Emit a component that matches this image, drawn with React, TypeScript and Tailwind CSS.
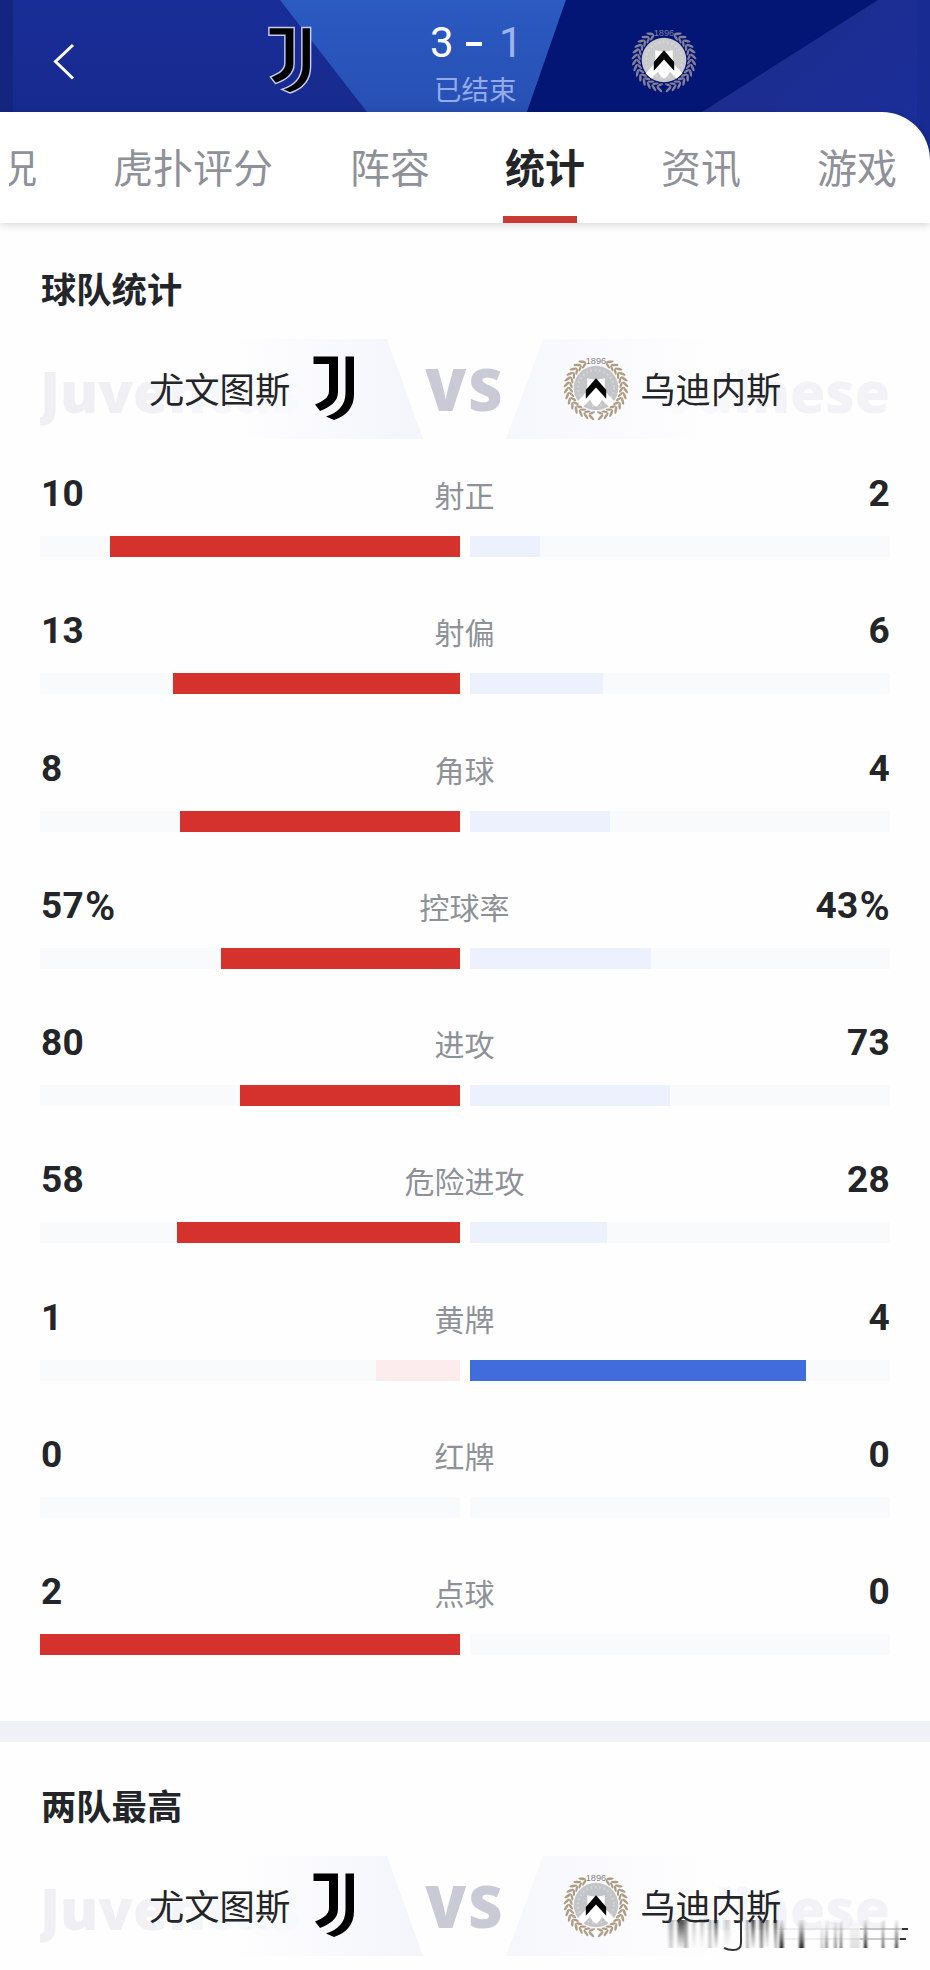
import clsx from "clsx";

type Stat = { label: string; home: number; away: number; unit?: string };

const stats: Stat[] = [
  { label: "射正", home: 10, away: 2 },
  { label: "射偏", home: 13, away: 6 },
  { label: "角球", home: 8, away: 4 },
  { label: "控球率", home: 57, away: 43, unit: "%" },
  { label: "进攻", home: 80, away: 73 },
  { label: "危险进攻", home: 58, away: 28 },
  { label: "黄牌", home: 1, away: 4 },
  { label: "红牌", home: 0, away: 0 },
  { label: "点球", home: 2, away: 0 },
];

// x offset, stroke width and opacity of each streak in the signature
const fadingDown = [
  [9, 5, 0.35], [19, 7, 0.85], [24, 3, 0.6], [32, 3, 0.3], [40, 3, 0.3], [48, 3, 0.35], [54, 3, 0.9],
  [65, 6, 0.2], [85.5, 2, 0.5], [91, 4, 0.85], [99.5, 4, 0.8], [105, 3, 0.6], [113.5, 3, 0.8],
];
const fadingUp = [
  [9, 4, 0.15], [24, 4, 0.25], [48, 3, 0.2], [85.5, 2, 0.4], [99.5, 3, 0.4], [114, 2, 0.3],
  [119.5, 4, 0.95], [139.5, 5, 0.9], [160, 2, 0.3], [164.5, 2, 0.7], [173.5, 2, 0.65], [179, 2, 0.75],
  [193, 10, 0.12], [203.5, 3, 0.95], [221, 2, 0.8], [234.5, 2.5, 0.9],
];

export default function App() {
  return (
    <div className="h-[1970px] w-[930px] overflow-hidden bg-[#fefefe] font-['Noto_Sans_CJK_SC',sans-serif] text-[#242528]">
      <ScoreHeader />
      <section className="h-[1498px] px-10 pt-10">
        <SectionTitle>球队统计</SectionTitle>
        <Matchup />
        <div className="mt-[29px]">
          {stats.map((stat) => (
            <StatRow key={stat.label} {...stat} />
          ))}
        </div>
      </section>
      <div className="h-[21px] bg-[#f0f1f7]" />
      <section className="px-10 pt-[38px]">
        <SectionTitle>两队最高</SectionTitle>
        <Matchup signed />
      </section>
    </div>
  );
}

function ScoreHeader() {
  return (
    <header className="relative h-[223px] bg-[#1a2f9c]">
      <svg className="absolute inset-0" width="930" height="223" viewBox="0 0 930 223">
        <defs>
          <linearGradient id="mid" x1="0" y1="0" x2="0" y2="1">
            <stop offset="0" stopColor="#2b5ac1" />
            <stop offset="1" stopColor="#2750b4" />
          </linearGradient>
          <linearGradient id="base" x1="0" y1="0" x2="0" y2="1">
            <stop offset="0" stopColor="#192d98" />
            <stop offset="1" stopColor="#172a8e" />
          </linearGradient>
          <linearGradient id="corner" x1="0" y1="0" x2="1" y2="1">
            <stop offset="0.3" stopColor="#1c2d90" />
            <stop offset="1" stopColor="#1a2f9f" />
          </linearGradient>
        </defs>
        <rect width="930" height="112" fill="url(#base)" />
        <rect width="13" height="112" fill="#14257f" />
        <path d="M280 0H566L527 112H367Z" fill="url(#mid)" />
        <path d="M566 0H930V223H700L527 112Z" fill="#031675" />
        <path d="M878 0H930V223H702V112Z" fill="url(#corner)" />
        <rect x="917" width="13" height="223" fill="#182b93" />
      </svg>

      <div className="relative flex h-28">
        <svg className="mt-[43px] ml-[52px] shrink-0" width="24" height="38" viewBox="0 0 24 38" fill="none" stroke="#fff" strokeWidth="3">
          <path d="M21 2L3.500 18.500L21 35.500" />
        </svg>
        <JuventusLogo className="mt-[26px] ml-[190px] h-[68px] w-[47px] shrink-0" outlined />
        <div className="ml-[112px] w-[102px] shrink-0 pt-[21px]">
          <div className="flex h-11 items-center pl-[5px] font-['Roboto',sans-serif] text-[42px] leading-[44px] text-white">
            <span className="w-[36px]">3</span>
            <span className="mt-px h-[4px] w-[16px] bg-white" />
            <span className="ml-[17px] text-[#9db4ec]">1</span>
          </div>
          <p className="ml-[9px] mt-[9px] whitespace-nowrap text-[27.500px] leading-[28px] text-[#93abeb]">已结束</p>
        </div>
        <UdineseLogo className="mt-[27px] ml-[104px] size-[66px] shrink-0" dark />
      </div>

      <nav className="relative flex h-[111px] items-center rounded-tr-[48px] bg-white pb-[3px] text-[40px] text-[#8e9198] shadow-[0_2px_8px_rgba(0,0,0,0.16)]">
        <div className="ml-[9px] flex w-[28px] justify-end overflow-hidden">
          <span>况</span>
        </div>
        <span className="ml-[76px]">虎扑评分</span>
        <span className="ml-[77px]">阵容</span>
        <span className="relative ml-[75px] font-bold text-[#242528]">
          统计
          <i className="absolute -bottom-[27px] -left-[2px] h-[7px] w-[74px] bg-[#c93a36]" />
        </span>
        <span className="ml-[76px]">资讯</span>
        <span className="ml-[76px]">游戏</span>
      </nav>
    </header>
  );
}

function SectionTitle({ children }: { children: string }) {
  return <h2 className="h-[52px] pl-px text-[35.300px] leading-[50px] font-bold">{children}</h2>;
}

function Matchup({ signed }: { signed?: boolean }) {
  return (
    <div className="relative mt-6 flex h-[100px] w-[850px] items-center text-[35px]">
      <svg className="absolute inset-0" width="850" height="100" viewBox="0 0 850 100">
        <defs>
          <linearGradient id="fadeLeft" x1="0" x2="1">
            <stop offset="0" stopColor="#f3f5fb" stopOpacity="0" />
            <stop offset="1" stopColor="#f4f5fb" />
          </linearGradient>
          <linearGradient id="fadeRight" x1="0" x2="1">
            <stop offset="0" stopColor="#f6f7fc" />
            <stop offset="1" stopColor="#f6f7fc" stopOpacity="0" />
          </linearGradient>
        </defs>
        <path d="M190 0H347L383 100H190Z" fill="url(#fadeLeft)" />
        <path d="M503 0H680V100H466Z" fill="url(#fadeRight)" />
      </svg>
      <span className="absolute left-0 top-[14px] bg-gradient-to-r from-[#efeff4] from-30% to-[#f8f9fc] to-75% bg-clip-text font-['Open_Sans',sans-serif] text-[57px] leading-[76px] font-extrabold text-transparent">Juventus</span>
      <span className="absolute right-0 top-[14px] bg-gradient-to-r from-[#fafbfd] from-10% to-[#f2f2f7] to-60% bg-clip-text font-['Open_Sans',sans-serif] text-[57px] leading-[76px] font-extrabold text-transparent">Udinese</span>

      <span className="relative ml-[109px] -translate-y-px text-[35.300px]">尤文图斯</span>
      <JuventusLogo className="relative ml-[22px] h-[66px] w-[43px] -translate-y-px" />
      <span className="relative ml-[70px] w-[79px] -translate-y-px font-['Open_Sans',sans-serif] text-[59px] leading-none font-extrabold tracking-[2px] text-[#cacad6]">VS</span>
      <UdineseLogo className="relative ml-[59px] size-[66px] -translate-y-px" />
      <span className="relative ml-[11px] -translate-y-px text-[35.300px]">乌迪内斯</span>
      {signed && <Signature />}
    </div>
  );
}

function StatRow({ label, home, away, unit }: Stat) {
  const total = home + away || 1;
  const mark = unit && <span className="relative top-[2px] ml-px text-[41px] leading-none font-semibold">{unit}</span>;
  return (
    <div className="h-[137.300px]">
      <div className="relative flex h-[50px] items-center justify-between pt-[2px] pl-px font-['Roboto',sans-serif] text-[37px] leading-[50px] font-bold tracking-[0.300px]">
        <span>{home}{mark}</span>
        <span>{away}{mark}</span>
        <span className="absolute inset-x-0 top-px -ml-px text-center font-['Noto_Sans_CJK_SC',sans-serif] text-[30px] leading-[50px] font-normal tracking-normal text-[#8e9198]">{label}</span>
      </div>
      <div className="mt-[18px] grid h-[21px] w-[850px] grid-cols-2 gap-[10px]">
        <div className="flex justify-end bg-[#f9fafb]">
          <div className={clsx("h-full", home >= away ? "bg-[#d5322e]" : "bg-[#fcecee]")} style={{ width: `${(home / total) * 100}%` }} />
        </div>
        <div className="bg-[#f9fafb]">
          <div className={clsx("h-full", away > home ? "bg-[#416ddc]" : "bg-[#edf1fe]")} style={{ width: `${(away / total) * 100}%` }} />
        </div>
      </div>
    </div>
  );
}

function JuventusLogo({ className, outlined }: { className?: string; outlined?: boolean }) {
  return (
    <svg className={className} viewBox="0 0 43 66" fill="#000" stroke={outlined ? "#c6ccf2" : "none"} strokeWidth="1.400">
      <path d="M1.500 1.500H26V37C26 47 18 52 8 56L3 49.500C11 46 17 43 17 36V9H1.500Z" />
      <path d="M33.500 1.500H42V39C42 53 34 61 22 65L14 61.500C25 58 33.500 51 33.500 38Z" />
    </svg>
  );
}

function UdineseLogo({ className, dark }: { className?: string; dark?: boolean }) {
  const leaf = dark ? "#85809a" : "#ae9c83";
  // leaf angles measured from the foot of the wreath
  const angles = [9, 20, 31, 42, 53, 64, 75, 86, 97, 108, 119, 130, 141, 152];
  return (
    <svg className={className} viewBox="0 0 68 68">
      {[1, -1].map((side) => (
        <g key={side} transform={side === 1 ? undefined : "translate(68 0) scale(-1 1)"}>
          {angles.map((angle) => (
            <g key={angle} transform={`rotate(${-angle} 34 34)`} fill={leaf}>
              <ellipse cx="34" cy="64.500" rx="4" ry="1.300" transform="rotate(-38 34 64.500)" />
              <ellipse cx="34" cy="60" rx="3.400" ry="1.200" transform="rotate(30 34 60)" />
            </g>
          ))}
        </g>
      ))}
      <circle cx="34" cy="34" r="23" fill={dark ? "#c9cacc" : "#c4c5c8"} />
      <circle cx="34" cy="34" r="18.500" fill="none" stroke="#d6d7d9" strokeWidth="2.500" strokeDasharray="1.500 3" />
      <path d="M25 24Q34 27 43 24V37L53 48L47 53L40 46Q38 51 34 53Q30 51 28 46L21 53L15 48L25 37Z" fill="#fff" />
      <path d="M34 24L44.500 36V45L34 33.500L23.500 45V36Z" fill="#050505" />
      <text x="34" y="9.500" textAnchor="middle" fontSize="9.500" fontFamily="Liberation Sans" fill={dark ? "#817e9c" : "#85817c"}>1896</text>
    </svg>
  );
}

function Signature() {
  return (
    <svg className="absolute left-[622px] top-[60px]" width="250" height="38" viewBox="0 0 250 38" fill="none">
      <defs>
        <linearGradient id="down" x1="0" y1="4" x2="0" y2="32" gradientUnits="userSpaceOnUse">
          <stop offset="0" stopColor="#222" />
          <stop offset="0.400" stopColor="#333" stopOpacity="0.650" />
          <stop offset="1" stopColor="#555" stopOpacity="0.100" />
        </linearGradient>
        <linearGradient id="up" x1="0" y1="4" x2="0" y2="32" gradientUnits="userSpaceOnUse">
          <stop offset="0" stopColor="#555" stopOpacity="0.100" />
          <stop offset="0.500" stopColor="#333" stopOpacity="0.600" />
          <stop offset="1" stopColor="#111" />
        </linearGradient>
        <filter id="smear" x="0" y="0" width="250" height="38" filterUnits="userSpaceOnUse">
          <feGaussianBlur stdDeviation="0.900 0" />
        </filter>
      </defs>
      <g filter="url(#smear)">
        {fadingDown.map(([x, width, opacity]) => (
          <rect key={x} x={x - width / 2} y="4" width={width} height="28" fill="url(#down)" opacity={opacity} />
        ))}
        {fadingUp.map(([x, width, opacity]) => (
          <rect key={x} x={x - width / 2} y="4" width={width} height="28" fill="url(#up)" opacity={opacity} />
        ))}
      </g>
      <path d="M79 4V27Q79 34 71 34Q66 34 62 32" stroke="#333" strokeWidth="2" />
      <path d="M3 5H26M120 13H200M120 23H200" stroke="#999" strokeOpacity="0.300" />
      <path d="M198 13H240M198 23H240" stroke="#999" />
      <path d="M240 13H246M238 23H244" stroke="#333" strokeWidth="2" />
    </svg>
  );
}
